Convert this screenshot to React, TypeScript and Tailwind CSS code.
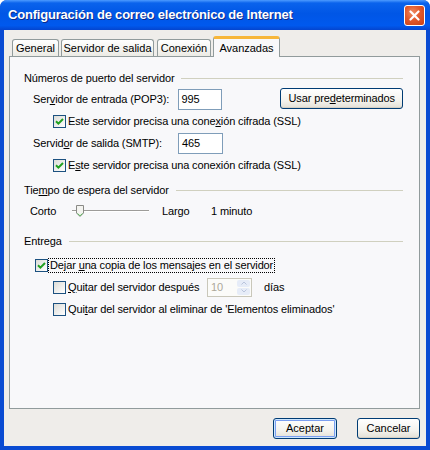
import React from "react";

const Check: React.FC<{ checked?: boolean }> = ({ checked }) => (
  <span className="w-[13px] h-[13px] shrink-0 border border-[#1c5180] bg-[linear-gradient(135deg,#dcdcd7,#ffffff)] flex items-center justify-center">
    {checked && (
      <svg width="9" height="9" viewBox="0 0 9 9">
        <path d="M1 4.2 L3.4 6.6 L8 2" fill="none" stroke="#21a121" strokeWidth="2" />
      </svg>
    )}
  </span>
);

const Header: React.FC<{ children: React.ReactNode; className?: string }> = ({ children, className }) => (
  <div className={"flex items-center gap-[7px] h-[14px] " + (className ?? "")}>
    <span className="whitespace-nowrap">{children}</span>
    <span className="flex-1 h-px bg-[#d0d0bf]" />
  </div>
);

const XpButton: React.FC<{ children: React.ReactNode; className?: string; primary?: boolean }> = ({
  children,
  className,
  primary,
}) => (
  <button
    className={
      "h-[21px] rounded-[3px] border border-[#003c74] bg-[linear-gradient(180deg,#ffffff_0%,#f4f3ee_60%,#e3e0d6_100%)] text-black flex items-center justify-center " +
      (primary ? "shadow-[inset_0_0_0_1px_#cee7ff,inset_0_0_0_2px_#7b9ff0] " : "shadow-[inset_0_-1px_0_#d6d0c5] ") +
      (className ?? "")
    }
  >
    {children}
  </button>
);

const tabs = [
  { label: "General", w: "w-[47px]", ml: "" },
  { label: "Servidor de salida", w: "w-[93px]", ml: "ml-[2px]" },
  { label: "Conexión", w: "w-[54px]", ml: "ml-[3px]" },
];

export default function App() {
  return (
    <div
      className="w-[430px] h-[450px] flex flex-col bg-[#0a4bd2] rounded-t-[7px] overflow-hidden text-[11px] text-black"
      style={{ fontFamily: '"Liberation Sans", Arial, sans-serif' }}
    >
      {/* title bar */}
      <div className="h-[30px] shrink-0 flex items-center justify-between pl-[8px] pr-[5px] bg-[linear-gradient(180deg,#4d9bff_0%,#0a63ec_10%,#0056e6_45%,#0059ee_85%,#0445cf_100%)]">
        <span className="text-white font-bold text-[13px] [text-shadow:1px_1px_0_#0b2a8a] tracking-[-0.2px]">
          Configuración de correo electrónico de Internet
        </span>
        <span className="w-[21px] h-[21px] rounded-[3px] border border-white bg-[radial-gradient(circle_at_40%_35%,#f08c62_0%,#e2592c_45%,#c73f14_100%)] flex items-center justify-center">
          <svg width="11" height="11" viewBox="0 0 11 11">
            <path d="M1.5 1.5 L9.5 9.5 M9.5 1.5 L1.5 9.5" stroke="#fff" strokeWidth="2.2" strokeLinecap="round" />
          </svg>
        </span>
      </div>

      {/* client */}
      <div className="flex-1 mx-[4px] mb-[4px] bg-[#efedea] flex flex-col pl-[5px] pr-[6px]">
        {/* tabs */}
        <div className="h-[26px] shrink-0 flex items-end pl-[3px]">
          {tabs.map((t) => (
            <div
              key={t.label}
              className={
                "h-[17px] rounded-t-[3px] border border-b-0 border-[#919b9c] bg-[linear-gradient(180deg,#ffffff,#ecebe5)] flex items-center justify-center " +
                t.w +
                " " +
                t.ml
              }
            >
              {t.label}
            </div>
          ))}
          <div className="relative z-10 -mb-px ml-[2px] w-[67px] h-[21px] rounded-t-[3px] border border-b-0 border-[#919b9c] border-t-[3px] border-t-[#f7b63a] bg-[#f8f8fa] flex items-start justify-center pt-[1px]">
            Avanzadas
          </div>
        </div>

        {/* panel */}
        <div className="h-[353px] shrink-0 border border-[#919b9c] bg-[#f8f8fa] pl-[14px] pr-[16px] pt-[14px] flex flex-col tracking-[-0.12px]">
          <Header>Números de puerto del servidor</Header>

          <div className="mt-[4px] h-[21px] flex items-center pl-[9px]">
            <span className="w-[145px]">
              Ser<u>v</u>idor de entrada (POP3):
            </span>
            <span className="w-[45px] h-[21px] border border-[#7f9db9] bg-white flex items-center pl-[3px]">995</span>
            <XpButton className="ml-[58px] w-[123px] h-[20px] self-start -mt-px">
              Usar pre<u>d</u>eterminados
            </XpButton>
          </div>

          <div className="mt-[1px] h-[20px] flex items-center gap-[2px] pl-[29px]">
            <Check checked />
            <span>
              Este servidor precisa una cone<u>x</u>ión cifrada (SSL)
            </span>
          </div>

          <div className="mt-[2px] h-[21px] flex items-center pl-[9px]">
            <span className="w-[145px]">
              Servid<u>o</u>r de salida (SMTP):
            </span>
            <span className="w-[45px] h-[21px] border border-[#7f9db9] bg-white flex items-center pl-[3px]">465</span>
          </div>

          <div className="mt-[1px] h-[20px] flex items-center gap-[2px] pl-[29px]">
            <Check checked />
            <span>
              E<u>s</u>te servidor precisa una conexión cifrada (SSL)
            </span>
          </div>

          <Header className="mt-[8px]">
            <>
              Tie<u>m</u>po de espera del servidor
            </>
          </Header>

          <div className="mt-[4px] h-[20px] flex items-center pl-[6px]">
            <span className="w-[42px]">Corto</span>
            <div className="w-[77px] h-[20px] flex items-center relative">
              <div className="w-full h-[2px] border-t border-[#9d9c99] border-b border-b-white" />
              <svg className="absolute left-[4px] top-[4px]" width="8" height="12" viewBox="0 0 8 12">
                <path
                  d="M0.5 0.5 H7.5 V8 L4 11.5 L0.5 8 Z"
                  fill="#f4f4f0"
                  stroke="#8a8a86"
                  strokeWidth="1"
                />
                <path d="M1.5 8.5 L4 10.8 L6.5 8.5" fill="none" stroke="#5cb85c" strokeWidth="1" />
              </svg>
            </div>
            <span className="ml-[13px] w-[49px]">Largo</span>
            <span>1 minuto</span>
          </div>

          <Header className="mt-[13px]">Entrega</Header>

          <div className="mt-[7px] h-[20px] flex items-center gap-[1px] pl-[11px]">
            <Check checked />
            <span className="outline-1 outline-dotted outline-black px-[1px] leading-[13px]">
              Dejar <u>u</u>na copia de los mensajes en el servidor
            </span>
          </div>

          <div className="mt-[2px] h-[20px] flex items-center pl-[29px]">
            <Check />
            <span className="ml-[2px] w-[139px]">
              <u>Q</u>uitar del servidor después
            </span>
            <span className="w-[45px] h-[19px] border border-[#c9c7ba] bg-[#fbfbf9] flex items-center justify-between pl-[3px] text-[#aca899]">
              10
              <span className="w-[15px] h-full flex flex-col gap-px p-px">
                <span className="flex-1 rounded-[2px] bg-[#e6ecf8] flex items-center justify-center">
                  <svg width="6" height="4" viewBox="0 0 6 4">
                    <path d="M0.5 3.5 L3 1 L5.5 3.5" fill="none" stroke="#b9c4dc" />
                  </svg>
                </span>
                <span className="flex-1 rounded-[2px] bg-[#e6ecf8] flex items-center justify-center">
                  <svg width="6" height="4" viewBox="0 0 6 4">
                    <path d="M0.5 0.5 L3 3 L5.5 0.5" fill="none" stroke="#b9c4dc" />
                  </svg>
                </span>
              </span>
            </span>
            <span className="ml-[12px]">días</span>
          </div>

          <div className="mt-[2px] h-[20px] flex items-center gap-[2px] pl-[29px]">
            <Check />
            <span>
              Qui<u>t</u>ar del servidor al eliminar de 'Elementos eliminados'
            </span>
          </div>
        </div>

        {/* buttons */}
        <div className="flex-1 flex items-start justify-end pt-[9px] gap-[20px]">
          <XpButton primary className="w-[64px]">
            Aceptar
          </XpButton>
          <XpButton className="w-[63px]">Cancelar</XpButton>
        </div>
      </div>
    </div>
  );
}
